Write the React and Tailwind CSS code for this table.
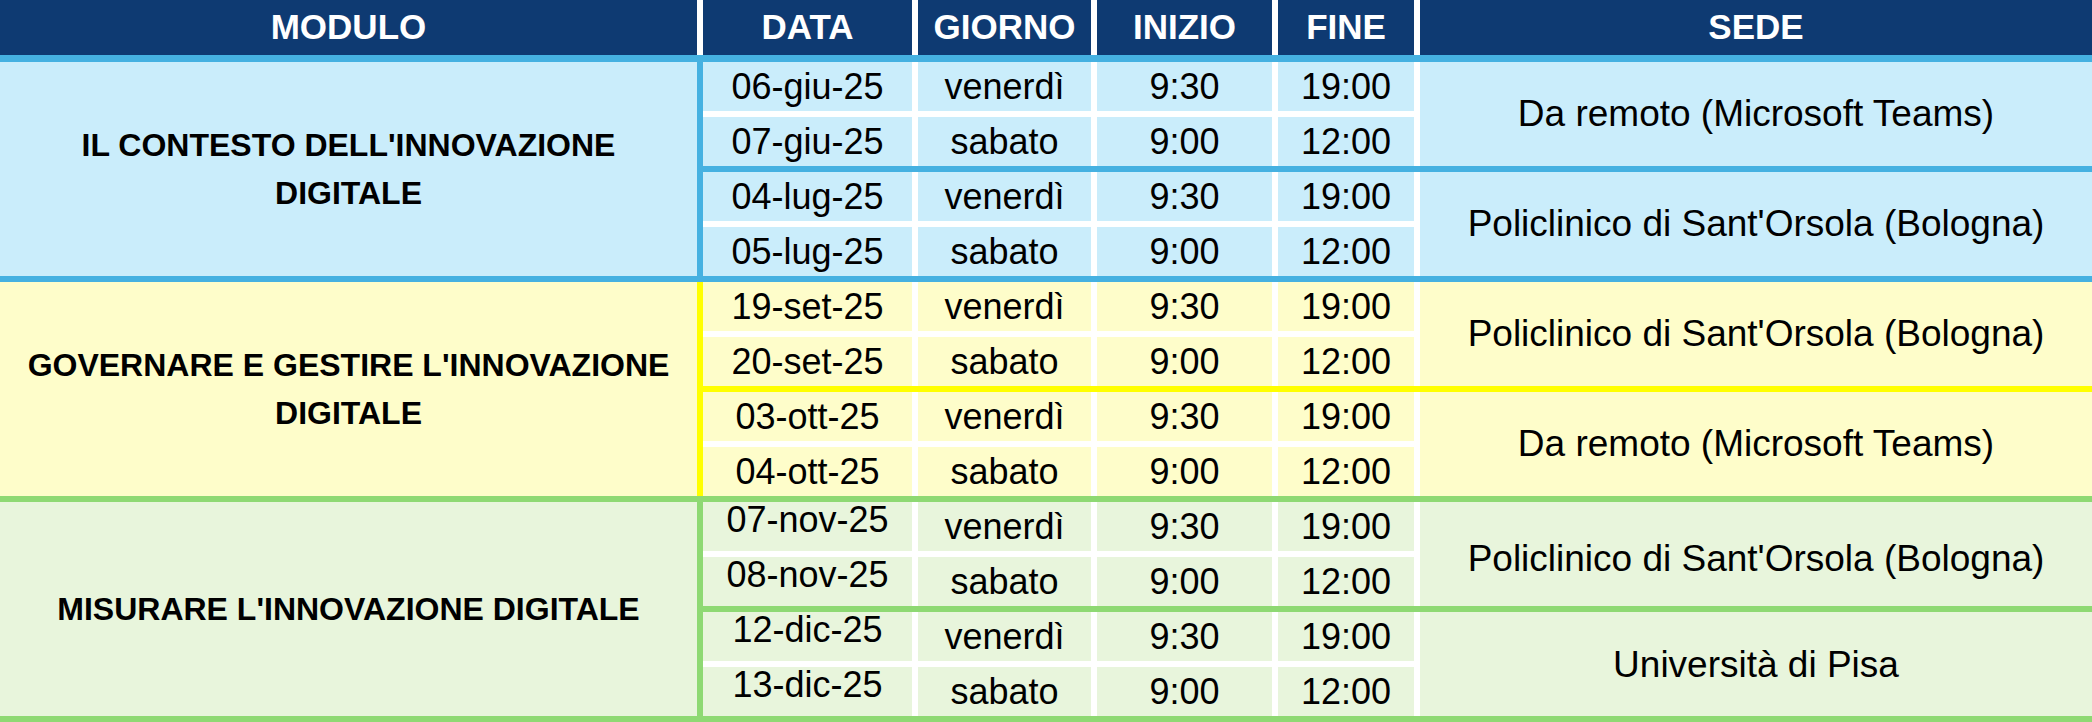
import React from 'react';

const sections = [
    {
        title: ["IL CONTESTO DELL'INNOVAZIONE", 'DIGITALE'],
        fill: 'bg-[#caedfb]',
        line: 'bg-[#45b1e1]',
        pairs: [
            {
                sede: 'Da remoto (Microsoft Teams)',
                rows: [
                    ['06-giu-25', 'venerdì', '9:30', '19:00'],
                    ['07-giu-25', 'sabato', '9:00', '12:00'],
                ],
            },
            {
                sede: "Policlinico di Sant'Orsola (Bologna)",
                rows: [
                    ['04-lug-25', 'venerdì', '9:30', '19:00'],
                    ['05-lug-25', 'sabato', '9:00', '12:00'],
                ],
            },
        ],
    },
    {
        title: ["GOVERNARE E GESTIRE L'INNOVAZIONE", 'DIGITALE'],
        fill: 'bg-[#fefdca]',
        line: 'bg-[#ffff00]',
        pairs: [
            {
                sede: "Policlinico di Sant'Orsola (Bologna)",
                rows: [
                    ['19-set-25', 'venerdì', '9:30', '19:00'],
                    ['20-set-25', 'sabato', '9:00', '12:00'],
                ],
            },
            {
                sede: 'Da remoto (Microsoft Teams)',
                rows: [
                    ['03-ott-25', 'venerdì', '9:30', '19:00'],
                    ['04-ott-25', 'sabato', '9:00', '12:00'],
                ],
            },
        ],
    },
    {
        title: ["MISURARE L'INNOVAZIONE DIGITALE"],
        fill: 'bg-[#e8f5dc]',
        line: 'bg-[#8ed973]',
        // in this block the dates sit high and the sede text sits a bit low
        shifted: true,
        pairs: [
            {
                sede: "Policlinico di Sant'Orsola (Bologna)",
                sedePad: 'pt-[10px]',
                rows: [
                    ['07-nov-25', 'venerdì', '9:30', '19:00'],
                    ['08-nov-25', 'sabato', '9:00', '12:00'],
                ],
            },
            {
                sede: 'Università di Pisa',
                sedePad: 'pt-[2px]',
                rows: [
                    ['12-dic-25', 'venerdì', '9:30', '19:00'],
                    ['13-dic-25', 'sabato', '9:00', '12:00'],
                ],
            },
        ],
    },
];

const widths = ['w-[209px]', 'w-[173px]', 'w-[175px]', 'w-[136px]'];
const headers = ['DATA', 'GIORNO', 'INIZIO', 'FINE'];

const Section = ({ section }) => {
    const { title, fill, line, pairs, shifted } = section;
    return (
        <div className="flex h-[214px]">
            {/* Modulo (merged cell) */}
            <div className={`w-[697px] ${fill} flex flex-col items-center justify-center text-[32px] leading-[48px] font-bold text-black`}>
                {title.map((t) => (
                    <span key={t}>{t}</span>
                ))}
            </div>
            <div className={`w-[6px] ${line}`} />

            <div className="flex-1 flex flex-col">
                {pairs.map((pair, pi) => (
                    <React.Fragment key={pi}>
                        {pi > 0 && <div className={`h-[6px] ${line}`} />}
                        <div className="flex gap-[6px] bg-white">
                            <div className="flex flex-col gap-[6px]">
                                {pair.rows.map((row) => (
                                    <div key={row[0]} className="flex gap-[6px] h-[49px]">
                                        {row.map((cell, ci) => (
                                            <div
                                                key={ci}
                                                className={`${widths[ci]} ${fill} flex items-center justify-center ${shifted && ci === 0 ? 'pb-[14px]' : ''}`}
                                            >
                                                {cell}
                                            </div>
                                        ))}
                                    </div>
                                ))}
                            </div>
                            <div className={`flex-1 ${fill} flex items-center justify-center text-[37px] ${pair.sedePad || ''}`}>
                                {pair.sede}
                            </div>
                        </div>
                    </React.Fragment>
                ))}
            </div>
        </div>
    );
};

export default function App() {
    return (
        <div className="w-[2092px] h-[722px] bg-white font-['Liberation_Sans',Arial,sans-serif] text-[36px] text-black overflow-hidden">
            {/* Header */}
            <div className="flex gap-[6px] h-[55px] bg-white text-white font-bold text-[35px]">
                <div className="w-[697px] bg-[#0e3a72] flex items-center justify-center">MODULO</div>
                {headers.map((h, i) => (
                    <div key={h} className={`${widths[i]} bg-[#0e3a72] flex items-center justify-center`}>
                        {h}
                    </div>
                ))}
                <div className="flex-1 bg-[#0e3a72] flex items-center justify-center">SEDE</div>
            </div>

            <div className="h-[7px] bg-[#45b1e1]" />
            <Section section={sections[0]} />
            <div className="h-[6px] bg-[#45b1e1]" />
            <Section section={sections[1]} />
            <div className="h-[6px] bg-[#8ed973]" />
            <Section section={sections[2]} />
            <div className="h-[6px] bg-[#8ed973]" />
        </div>
    );
}
